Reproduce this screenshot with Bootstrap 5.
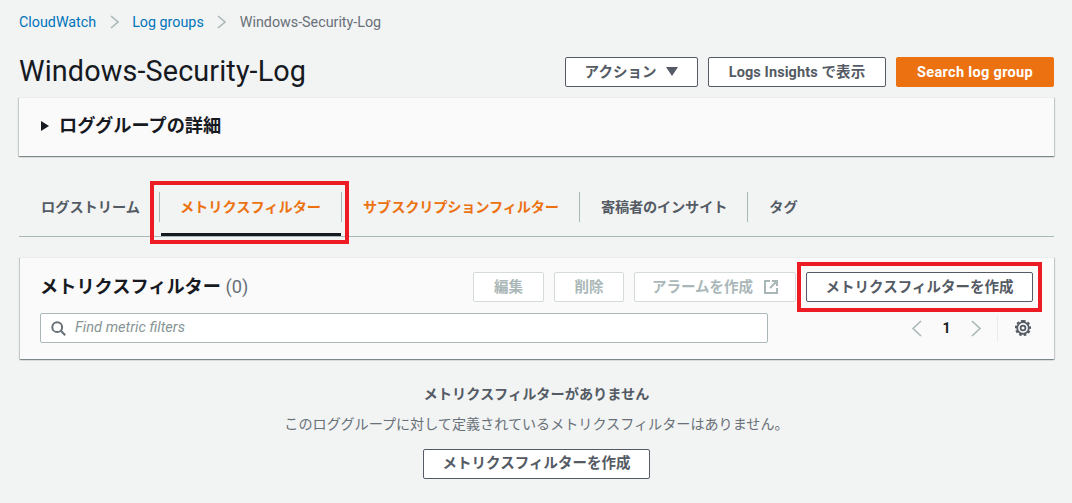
<!DOCTYPE html>
<html lang="ja">
<head>
<meta charset="utf-8">
<title>Windows-Security-Log</title>
<link href="https://cdn.jsdelivr.net/npm/bootstrap@5.3.0/dist/css/bootstrap.min.css" rel="stylesheet">
<style>
html,body{height:503px;overflow:hidden}
body{background:#f2f3f3;font-family:"Roboto","Noto Sans CJK JP",sans-serif;font-size:14px;color:#16191f}
.pg{padding:13px 18px 0 19px}
.crumbs{height:18px;line-height:18px;font-size:14.3px;gap:12.5px;color:#687078}
.crumbs a{color:#0073bb;text-decoration:none}
.crumbs svg{width:9px;height:14px;margin:0 1px}
.headrow{margin-top:25px;height:31px;margin-bottom:10px}
.ttl{font-size:28.8px;font-weight:400;line-height:31px;margin:0;color:#16191f;letter-spacing:.12px}
.btnset{column-gap:10px}
.awsbtn{height:30px;border:1px solid #545b64;border-radius:2px;background:#fff;color:#545b64;font-weight:700;font-size:14.5px;line-height:28px;padding:1px 0 0;text-align:center;white-space:nowrap}
.awsbtn.prim{background:#ec7211;border-color:#ec7211;color:#fff;letter-spacing:.33px}
.awsbtn.off{border-color:#d5dbdb;color:#aab7b8;background:#fff}
.b-act{width:133px}.b-li{width:178px;letter-spacing:.1px}.b-search{width:158px}
.caret{display:inline-block;margin-left:10px;border-left:6px solid transparent;border-right:6px solid transparent;border-top:9px solid #545b64;vertical-align:1px}
.panel{background:#fafafa;border-top:1px solid #eaeded;box-shadow:0 1px 1px 0 rgba(0,28,36,.3),1px 1px 1px 0 rgba(0,28,36,.15),-1px 1px 1px 0 rgba(0,28,36,.15)}
.det{height:59px;padding:0 0 2px 22px;font-size:18.2px;font-weight:700;gap:10px}
.tri{border-top:5px solid transparent;border-bottom:5px solid transparent;border-left:8px solid #16191f}
.tabstrip{margin-top:24px;height:57px;border-bottom:1px solid #aab7b8;padding-top:12px}
.tabi{height:30px;line-height:30px;padding:0 20px 0 21px;border-right:1px solid #aab7b8;color:#545b64;font-weight:700;font-size:14.2px;white-space:nowrap;position:relative}
.tabi:last-child{border-right:0}
.tabi.org{color:#ec7211}
.tabi.cur{border-left:1px solid #aab7b8;margin-left:-1px;padding-left:20px}
.tabi.cur::after{content:"";position:absolute;left:1px;right:0;top:41px;height:3px;background:#16191f}
.tabi.noedge{border-right:0;padding-left:22px}
.tabi.tight{letter-spacing:-.15px}
.tbl{margin:20px 0 0 1px;height:102px;padding:14px 21px 0 20px}
.tblhead{height:30px}
.tbltitle{font-size:18.2px;font-weight:700;margin:0;line-height:30px}
.tbltitle span{font-weight:400;color:#687078}
.b-edit{width:71px}.b-del{width:70px}.b-alarm{width:162px}
.b-make{width:227px;color:#545b64}
.ext{width:14px;height:14px;margin-left:11px;vertical-align:-2px}
.tblrow{margin-top:11px;height:30px}
.findbox{flex:none;width:728px;height:30px;background:#fff;border:1px solid #aab7b8;border-radius:2px;padding-left:10px;gap:9px}
.findbox input{border:0;outline:0;padding:0;flex:1;background:transparent;font-style:italic;font-size:14.6px;color:#16191f;font-family:inherit}
.findbox input::placeholder{color:#879596;opacity:1}
.pager{flex:none;height:30px;padding-right:2px}
.pnum{font-weight:700;font-size:14px;color:#16191f;width:49px;text-align:center}
.psep{width:1px;height:27px;background:#eaeded;margin:0 17px 0 15px}
.empty{margin-top:25px;text-align:center;color:#545b64}
.e1{font-weight:700;font-size:14.2px;line-height:20px}
.e2{margin-top:10px;line-height:20px;font-size:14.1px;color:#687078}
.awsbtn.e-btn{margin-top:15px;width:227px;display:inline-block;padding:0}
.redbox{position:absolute;border:4px solid #ed1c24;pointer-events:none}
.red1{left:150px;top:181px;width:199px;height:63px}
.red2{left:797px;top:262px;width:245px;height:50px}
</style>
</head>
<body>
<main class="pg">
  <nav class="crumbs d-flex align-items-center">
    <a href="#">CloudWatch</a>
    <svg viewBox="0 0 9 14" fill="none" stroke="#aab7b8" stroke-width="1.6"><path d="M1 1l7 6-7 6"/></svg>
    <a href="#">Log groups</a>
    <svg viewBox="0 0 9 14" fill="none" stroke="#aab7b8" stroke-width="1.6"><path d="M1 1l7 6-7 6"/></svg>
    <span>Windows-Security-Log</span>
  </nav>
  <div class="headrow d-flex justify-content-between align-items-center">
    <h1 class="ttl">Windows-Security-Log</h1>
    <div class="d-flex btnset">
      <button class="awsbtn b-act">アクション<span class="caret"></span></button>
      <button class="awsbtn b-li">Logs Insights で表示</button>
      <button class="awsbtn prim b-search">Search log group</button>
    </div>
  </div>
  <section class="panel det d-flex align-items-center">
    <span class="tri"></span><span>ロググループの詳細</span>
  </section>
  <div class="tabstrip d-flex">
    <div class="tabi noedge">ログストリーム</div>
    <div class="tabi org cur">メトリクスフィルター</div>
    <div class="tabi org tight">サブスクリプションフィルター</div>
    <div class="tabi tight">寄稿者のインサイト</div>
    <div class="tabi">タグ</div>
  </div>
  <section class="panel tbl">
    <div class="tblhead d-flex justify-content-between align-items-center">
      <h2 class="tbltitle">メトリクスフィルター <span>(0)</span></h2>
      <div class="d-flex btnset">
        <button class="awsbtn off b-edit">編集</button>
        <button class="awsbtn off b-del">削除</button>
        <button class="awsbtn off b-alarm">アラームを作成<svg class="ext" viewBox="0 0 14 14" fill="none" stroke="#aab7b8" stroke-width="2"><path d="M6 1H1v12h12V8M8 1h5v5M13 1L6 8"/></svg></button>
        <button class="awsbtn b-make">メトリクスフィルターを作成</button>
      </div>
    </div>
    <div class="tblrow d-flex justify-content-between align-items-center">
      <div class="findbox d-flex align-items-center">
        <svg width="15" height="15" viewBox="0 0 15 15" fill="none" stroke="#687078" stroke-width="2"><circle cx="6.2" cy="6.2" r="4.9"/><path d="M9.8 9.8l4.4 4.4"/></svg>
        <input type="text" placeholder="Find metric filters" aria-label="Find metric filters">
      </div>
      <div class="pager d-flex align-items-center justify-content-end">
        <svg width="11" height="17" viewBox="0 0 11 17" fill="none" stroke="#aab7b8" stroke-width="1.6"><path d="M10 1L2 8.5l8 7.5"/></svg>
        <span class="pnum">1</span>
        <svg width="11" height="17" viewBox="0 0 11 17" fill="none" stroke="#aab7b8" stroke-width="1.6"><path d="M1 1l8 7.5L1 16"/></svg>
        <span class="psep"></span>
        <svg width="16" height="16" viewBox="0 0 16 16" fill="none" stroke="#545b64"><circle cx="8" cy="8" r="2.4" stroke-width="1.8"/><circle cx="8" cy="8" r="5.8" stroke-width="1.8"/><path stroke-width="2" stroke-dasharray="2.6 2.1" d="M8 .9a7.1 7.1 0 1 1 0 14.2a7.1 7.1 0 1 1 0-14.2"/></svg>
      </div>
    </div>
  </section>
  <section class="empty">
    <div class="e1">メトリクスフィルターがありません</div>
    <div class="e2">このロググループに対して定義されているメトリクスフィルターはありません。</div>
    <button class="awsbtn e-btn">メトリクスフィルターを作成</button>
  </section>
</main>
<div class="redbox red1"></div>
<div class="redbox red2"></div>
<script src="https://cdn.jsdelivr.net/npm/bootstrap@5.3.0/dist/js/bootstrap.bundle.min.js"></script>
</body>
</html>
